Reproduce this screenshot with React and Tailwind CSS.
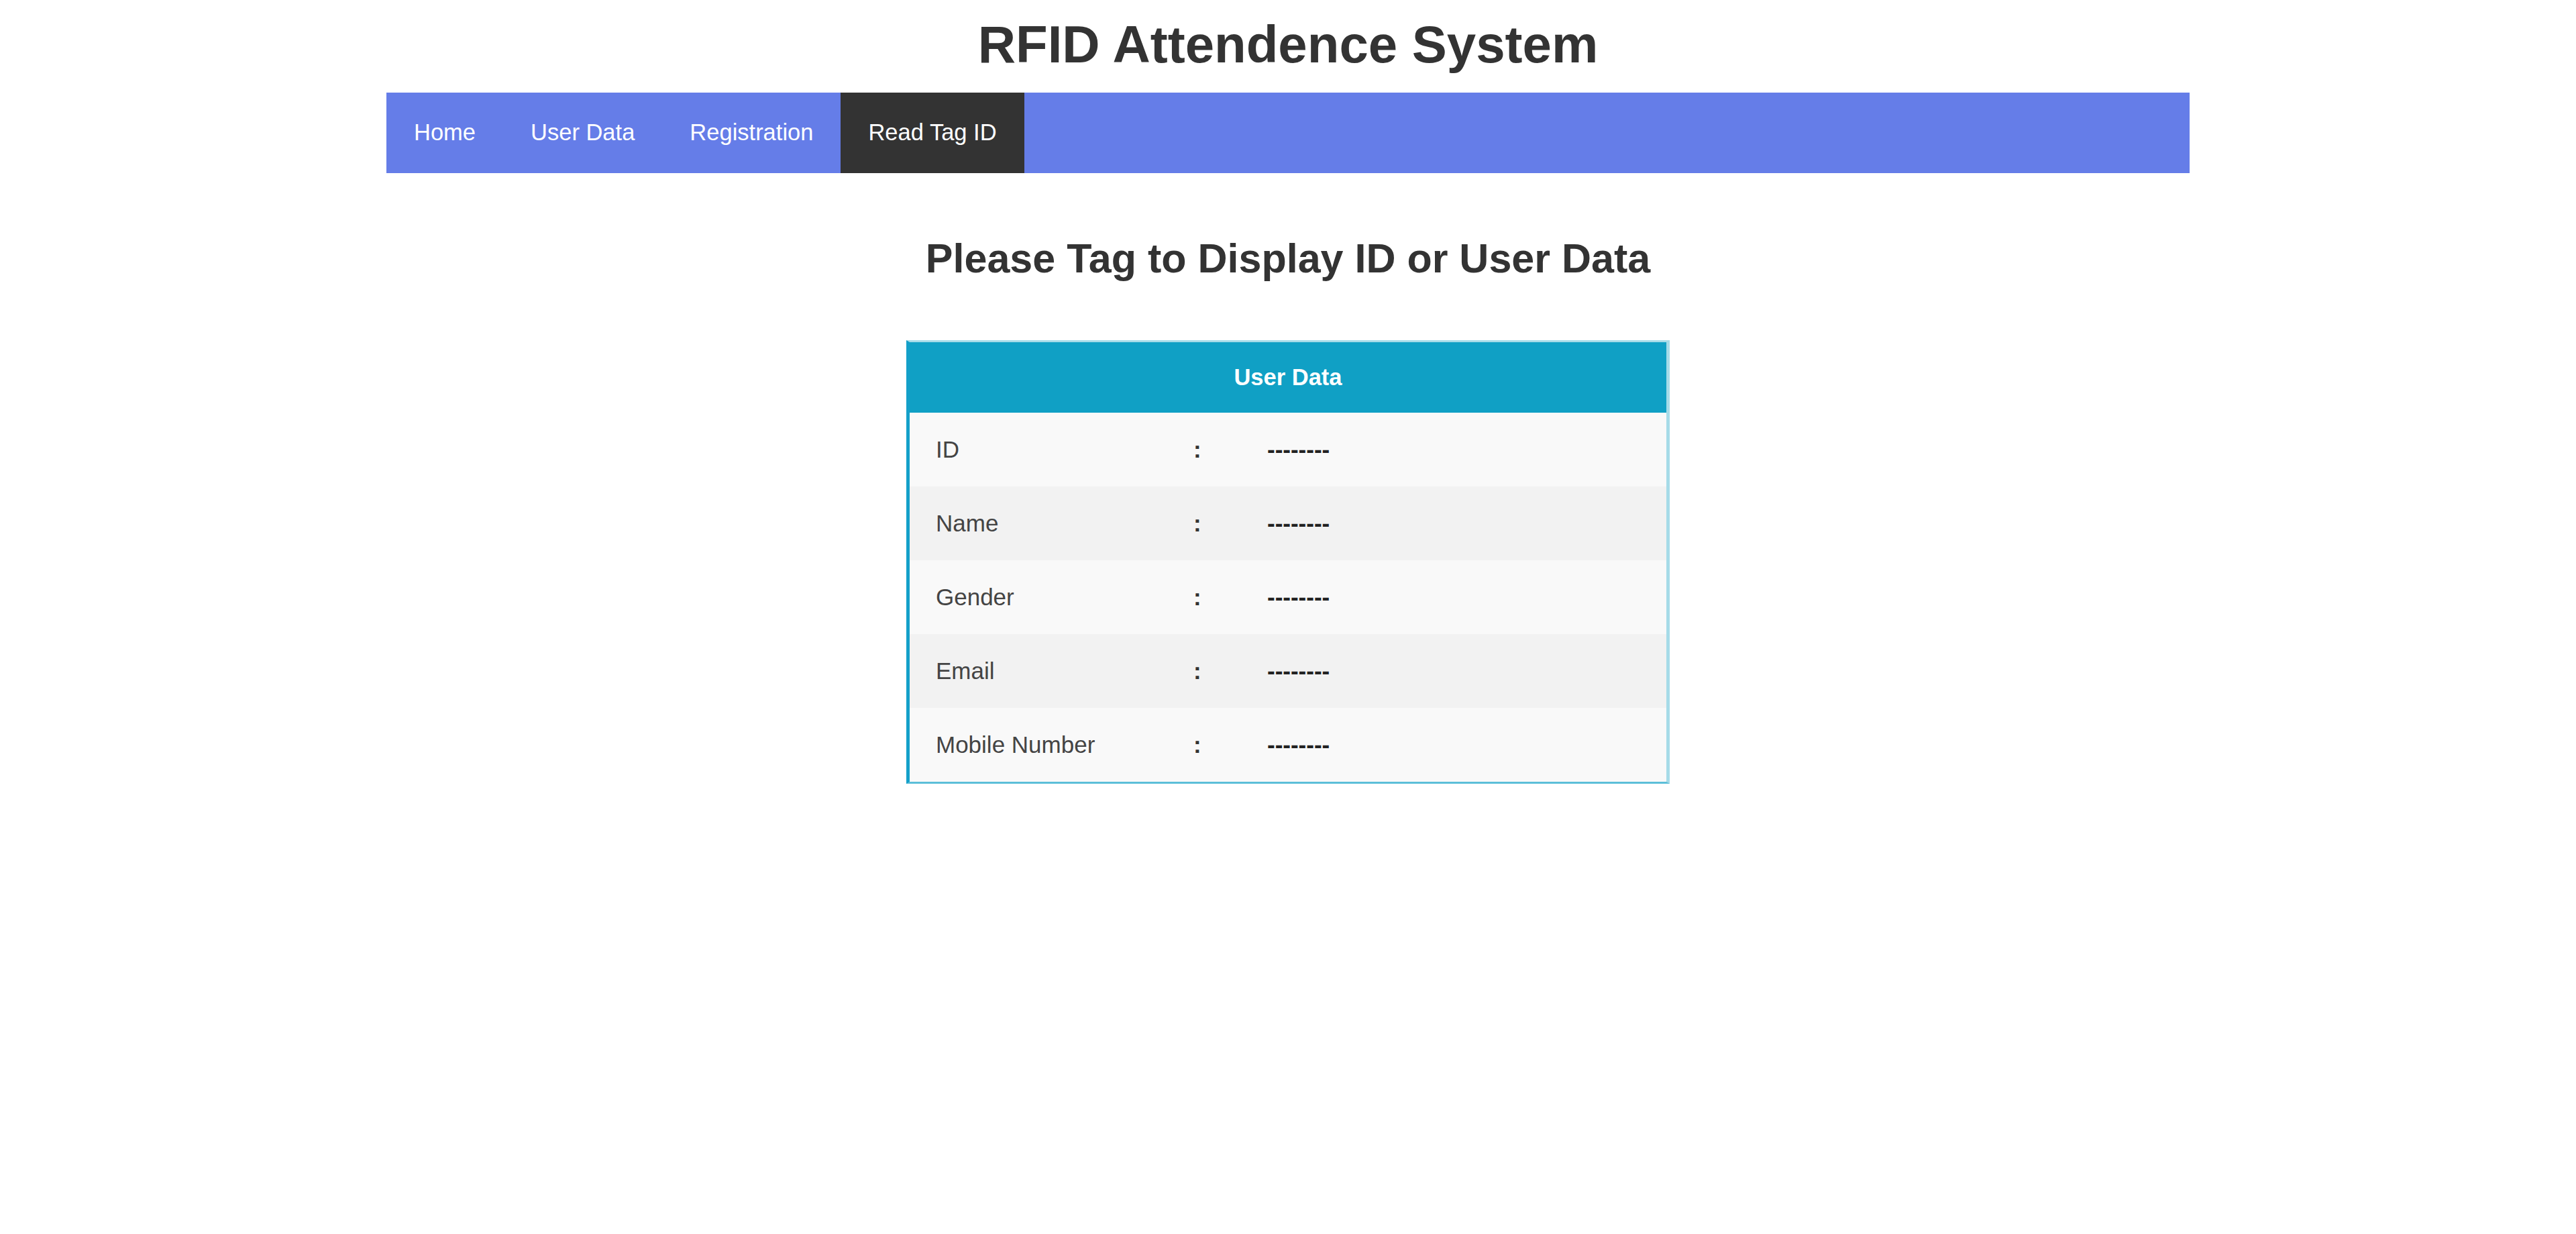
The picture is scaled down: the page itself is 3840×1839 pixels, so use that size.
import React from "react";

const links = ["Home", "User Data", "Registration", "Read Tag ID"];

const rows = [
  { label: "ID", bg: "bg-[#f9f9f9]" },
  { label: "Name", bg: "bg-[#f2f2f2]" },
  { label: "Gender", bg: "bg-[#f9f9f9]" },
  { label: "Email", bg: "bg-[#f2f2f2]" },
  { label: "Mobile Number", bg: "bg-[#f9f9f9]" },
];

export default function App() {
  const active = "Read Tag ID";

  return (
    <div
      className="min-h-screen bg-white text-[#333] pt-[21px]"
      style={{ fontFamily: '"Liberation Sans", Arial, sans-serif' }}
    >
      {/* Title */}
      <h1 className="text-center text-[78px] leading-[90px] font-bold mb-[27px]">
        RFID Attendence System
      </h1>

      {/* Top navigation */}
      <nav className="w-[70%] mx-auto h-[120px] flex bg-[#657de8]">
        {links.map((l) => (
          <a
            key={l}
            href="#"
            className={
              "flex items-center px-[41px] text-[34.5px] text-white " +
              (l === active ? "bg-[#333333]" : "")
            }
          >
            {l}
          </a>
        ))}
      </nav>

      {/* Heading */}
      <h2 className="mt-[92px] text-center text-[61px] leading-[70px] font-bold">
        Please Tag to Display ID or User Data
      </h2>

      {/* User data table */}
      <div className="w-[1138px] mx-auto mt-[87px] border-t-[3px] border-t-[#a8dce8] border-l-[5px] border-l-[#14a0c9] border-r-[5px] border-r-[#a6dbe8] border-b-[3px] border-b-[#5cbfd9]">
        <div className="h-[105px] bg-[#10a0c5] flex items-center justify-center text-white font-bold text-[34.5px]">
          User Data
        </div>
        {rows.map((r) => (
          <div
            key={r.label}
            className={"h-[110px] flex items-center pl-[39px] text-[35px] text-[#444] " + r.bg}
          >
            <span className="w-[384px]">{r.label}</span>
            <span className="w-[110px] font-bold text-[#333]">:</span>
            <span className="font-bold text-[#222]">--------</span>
          </div>
        ))}
      </div>
    </div>
  );
}
